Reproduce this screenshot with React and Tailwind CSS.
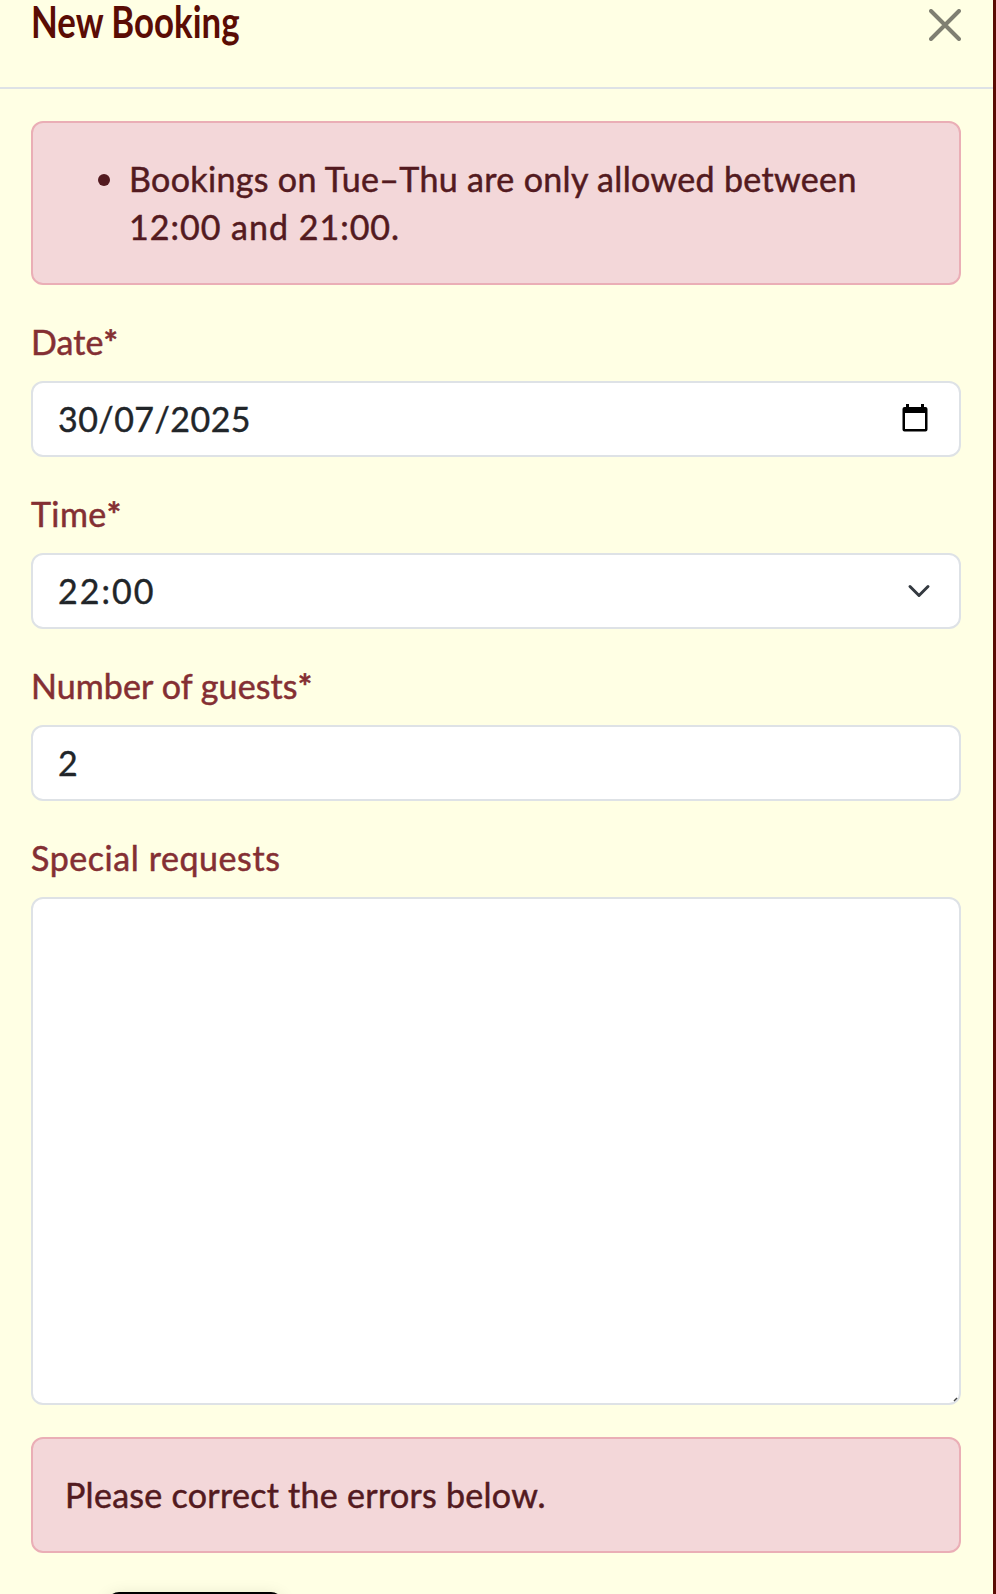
function Label({ children, className, required }) {
  return (
    <label className="mb-4 block h-12 whitespace-nowrap text-[34px] leading-[49px] text-[#842f33] [-webkit-text-stroke:0.5px]">
      <span className={className}>{children}</span>
      {required && <span className="font-bold">*</span>}
    </label>
  );
}

function Field({ children }) {
  return (
    <div className="mb-8 flex h-[76px] items-center justify-between rounded-[12px] border-2 border-[#dee2e6] bg-white pl-[25px] text-[34px] leading-[48px] text-[#212529] [-webkit-text-stroke:0.4px]">
      {children}
    </div>
  );
}

export default function App() {
  return (
    <div className="h-[1594px] w-[996px] overflow-hidden bg-[#5a0c04] font-['Lato','Open_Sans',sans-serif]">
      <div className="h-full w-[993px] overflow-hidden bg-[#ffffe4]">
        <header className="flex h-[89px] items-start justify-between border-b-2 border-[#dee2e6] pl-[31px] pr-8">
          <h1 className="origin-left scale-x-[0.81] whitespace-nowrap text-[43px] font-bold leading-[44px] text-[#5a0c04]">
            New Booking
          </h1>
          <button className="mt-[9px]" aria-label="Close">
            <svg width="32" height="32" viewBox="0 0 32 32" fill="none" stroke="#000" strokeOpacity="0.5" strokeWidth="4" strokeLinecap="round">
              <path d="M2 2 30 30M30 2 2 30" />
            </svg>
          </button>
        </header>
        <main className="pl-[31px] pr-8 pt-8">
          <div className="mb-8 rounded-[12px] border-2 border-[#eaaeb6] bg-[#f3d7d9] p-8 text-[34px] leading-[48px] text-[#531a20] [-webkit-text-stroke:0.5px]">
            <ul>
              <li className="flex">
                <span className="ml-[33px] mt-[19px] h-3 w-3 shrink-0 rounded-full bg-[#531a20]" />
                <span className="ml-[19px] whitespace-nowrap">
                  <span className="tracking-[0.34px]">Bookings on Tue–Thu are only allowed between</span>
                  <br />
                  <span className="tracking-[1px]">12:00 and 21:00.</span>
                </span>
              </li>
            </ul>
          </div>

          <Label className="tracking-[0.1px]" required>Date</Label>
          <Field>
            <span className="tracking-[0.45px]">30/07/2025</span>
            <svg className="mb-[2px] mr-[31px]" width="26" height="28" viewBox="0 0 26 28">
              <path fill="#000" fillRule="evenodd" d="M4 0h3v3h12V0h3v3h1.500q2 0 2 2v20.500q0 2-2 2h-21q-2 0-2-2V5q0-2 2-2H4zM3 9v16h20V9z" />
            </svg>
          </Field>

          <Label className="tracking-[0.4px]" required>Time</Label>
          <Field>
            <span className="tracking-[2px]">22:00</span>
            <svg className="mr-[28px]" width="24" height="24" viewBox="0 0 16 16" fill="none" stroke="#343a40" strokeWidth="2" strokeLinecap="round" strokeLinejoin="round">
              <path d="m2 5 6 6 6-6" />
            </svg>
          </Field>

          <Label className="tracking-[0.1px]" required>Number of guests</Label>
          <Field>
            <span>2</span>
          </Field>

          <Label className="tracking-[0.57px]">Special requests</Label>
          <div className="relative mb-8 h-[508px] rounded-[12px] border-2 border-[#dee2e6] bg-white">
            <svg className="absolute bottom-[1px] right-[1px]" width="5" height="5" viewBox="0 0 5 5" stroke="#444" strokeWidth="1.500">
              <path d="M1 4 4 1" />
            </svg>
          </div>

          <div className="mb-[39px] whitespace-nowrap rounded-[12px] border-2 border-[#eaaeb6] bg-[#f3d7d9] p-8 text-[34px] leading-[48px] text-[#531a20] [-webkit-text-stroke:0.5px]">
            <span className="tracking-[0.28px]">Please correct the errors below.</span>
          </div>
          <div className="ml-[76px] h-[76px] w-[176px] rounded-[12px] bg-black shadow-[0_2px_16px_rgba(0,0,0,0.1)]" />
        </main>
      </div>
    </div>
  );
}
